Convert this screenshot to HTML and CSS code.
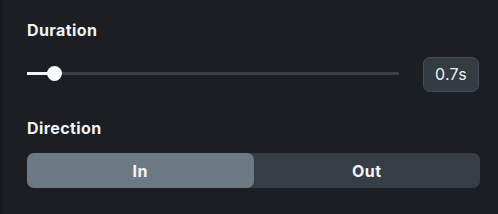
FILE: index.html
```html
<!DOCTYPE html>
<html lang='en'>

<head>
  <meta charset='utf-8'>
  <meta name='viewport' content='width=device-width, initial-scale=1'>
  <title>Transition</title>
  <link rel="stylesheet" href="styles.css">
</head>

<body>
  <div class="panel">
    <div class="label">Duration</div>
    <div class="slider-row">
      <div class="slider">
        <div class="slider-fill"></div>
        <span class="slider-thumb"></span>
      </div>
      <div class="value">0.7s</div>
    </div>
    <div class="label label-direction">Direction</div>
    <div class="segmented">
      <button class="seg active">In</button>
      <button class="seg">Out</button>
    </div>
  </div>
</body>

</html>
```

FILE: styles.css
```css
* {
  margin: 0;
  padding: 0;
  box-sizing: border-box;
}

html,
body {
  width: 100%;
  height: 100%;
  background-color: #1b1f23;
}

body {
  font-family: Inter, "Noto Sans", sans-serif;
  color: #f2f4f6;
}

.panel {
  height: 100%;
  border-left: 3px solid #16181b;
  padding: 20px 18px 0 24px;
}

.label {
  font-size: 16px;
  line-height: 20px;
  font-weight: 700;
  letter-spacing: 0.4px;
}

.label-direction {
  margin-top: 26px;
}

.slider-row {
  display: flex;
  align-items: center;
  gap: 24px;
  margin-top: 17px;
  padding-right: 1px;
}

.slider {
  flex: 1;
  position: relative;
  height: 3px;
  margin-top: -2px;
  background-color: #3b4047;
}

.slider-fill {
  width: 27px;
  height: 3px;
  background-color: #f4f5f7;
}

.slider-thumb {
  position: absolute;
  left: 20px;
  top: -6px;
  width: 15px;
  height: 15px;
  border-radius: 50%;
  background-color: #fafbfc;
}

.value {
  width: 56px;
  height: 35px;
  line-height: 33px;
  text-align: center;
  font-size: 16px;
  letter-spacing: 0.3px;
  background-color: #343b43;
  border: 1px solid #464d56;
  border-radius: 7px;
  color: #eef0f2;
}

.segmented {
  display: flex;
  height: 35px;
  margin-top: 15px;
  background-color: #373d45;
  border-radius: 7px;
}

.seg {
  flex: 1;
  border: none;
  background: none;
  border-radius: 7px;
  font-family: Inter, "Noto Sans", sans-serif;
  font-size: 16px;
  font-weight: 700;
  letter-spacing: 0.4px;
  color: #f2f4f6;
}

.seg.active {
  background-color: #6c7a86;
}
```
